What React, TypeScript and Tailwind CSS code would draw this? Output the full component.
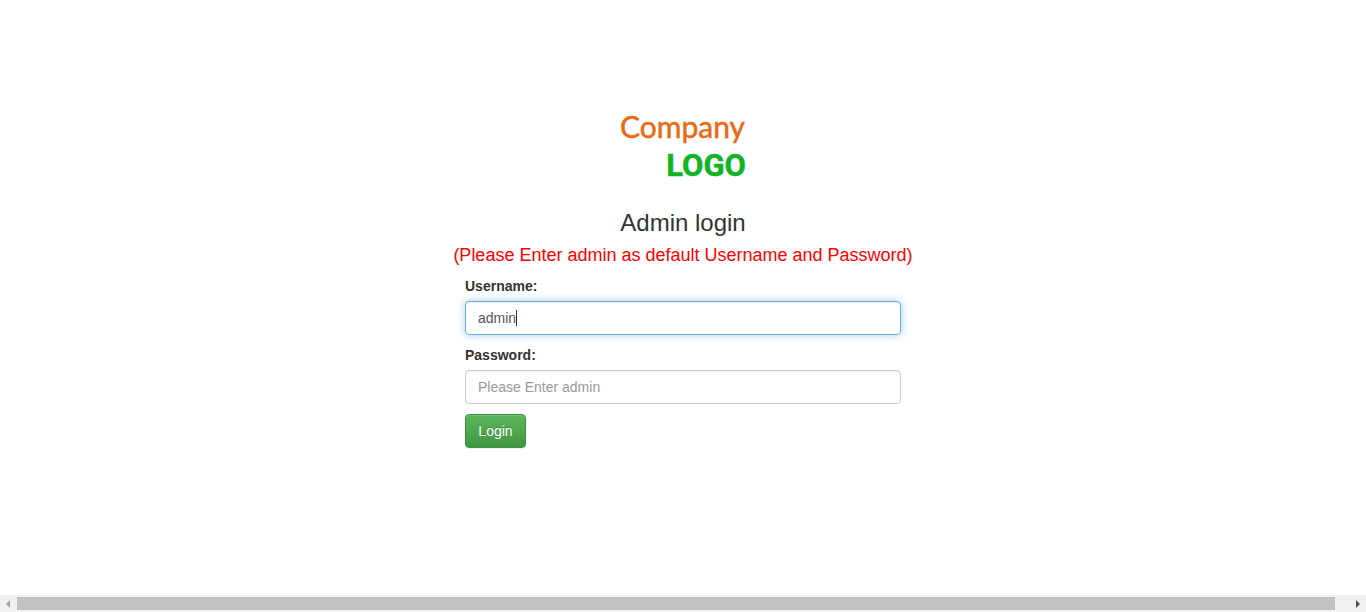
import { useState } from "react";

function Logo() {
  return (
    <svg
      viewBox="0 0 128 78"
      className="mx-auto block h-[78px] w-32"
      role="img"
      aria-label="Company logo"
    >
      <text
        x="1"
        y="30"
        fontFamily="Lato, sans-serif"
        fontSize="30"
        fill="#ea6a14"
        stroke="#ea6a14"
        strokeWidth="0.5"
      >
        Company
      </text>
      <text
        x="127"
        y="68"
        textAnchor="end"
        fontFamily="Roboto, sans-serif"
        fontWeight="700"
        fontSize="31"
        fill="#10b425"
        stroke="#10b425"
        strokeWidth="0.5"
      >
        LOGO
      </text>
    </svg>
  );
}

function ScrollBar() {
  return (
    <div className="flex h-[17px] shrink-0 items-center bg-[#f1f1f1]" aria-hidden="true">
      <div className="flex w-[17px] pl-[6px]">
        <svg viewBox="0 0 4 8" className="h-2 w-1">
          <path d="M4 0v8L0 4z" fill="#a3a3a3" />
        </svg>
      </div>
      <div className="mr-[14px] h-[13px] flex-1 bg-[#c1c1c1]" />
      <div className="flex w-[17px] pl-[7px]">
        <svg viewBox="0 0 4 8" className="h-2 w-1">
          <path d="M0 0v8l4-4z" fill="#505050" />
        </svg>
      </div>
    </div>
  );
}

const field =
  "block h-[34px] w-full rounded-[4px] border bg-white px-3 py-[6px] text-sm text-[#555555] outline-none placeholder:text-[#999999]";

export default function App() {
  const [username, setUsername] = useState("admin");
  const [password, setPassword] = useState("");

  return (
    <div className="flex min-h-screen flex-col bg-white font-['Liberation_Sans',Arial,sans-serif] text-sm text-[#333333]">
      <main className="flex-1 px-4 pt-[108px]">
        <Logo />
        <h1 className="mt-6 text-center text-2xl leading-[26px]">Admin login</h1>
        <p className="mt-[9px] text-center text-lg leading-5 text-[#ff0000]">
          (Please Enter admin as default Username and Password)
        </p>
        <form className="mx-auto mt-[11px] max-w-[436px]" onSubmit={(e) => e.preventDefault()}>
          <label htmlFor="username" className="mb-[5px] block font-bold leading-5">
            Username:
          </label>
          <div className="relative">
            <input
              id="username"
              type="text"
              value={username}
              onChange={(e) => setUsername(e.target.value)}
              className={`${field} border-[#66afe9] caret-transparent shadow-[inset_0_1px_1px_rgba(0,0,0,0.075),0_0_8px_rgba(102,175,233,0.6)]`}
            />
            <div className="pointer-events-none absolute inset-y-0 left-[13px] flex items-center" aria-hidden="true">
              <span className="h-4 border-r border-[#333333] leading-4 text-transparent">{username}</span>
            </div>
          </div>
          <label htmlFor="password" className="mt-[10px] mb-[5px] block font-bold leading-5">
            Password:
          </label>
          <input
            id="password"
            type="password"
            placeholder="Please Enter admin"
            value={password}
            onChange={(e) => setPassword(e.target.value)}
            className={`${field} border-[#cccccc] shadow-[inset_0_1px_1px_rgba(0,0,0,0.075)]`}
          />
          <button
            type="submit"
            className="mt-[10px] h-[34px] min-w-[61px] rounded-[4px] border border-[#3e8f3e] bg-linear-to-b from-[#5cb85c] to-[#419641] px-3 leading-5 text-white shadow-[inset_0_1px_0_rgba(255,255,255,0.15),0_1px_1px_rgba(0,0,0,0.075)] [text-shadow:0_-1px_0_rgba(0,0,0,0.2)]"
          >
            Login
          </button>
        </form>
      </main>
      <ScrollBar />
    </div>
  );
}
